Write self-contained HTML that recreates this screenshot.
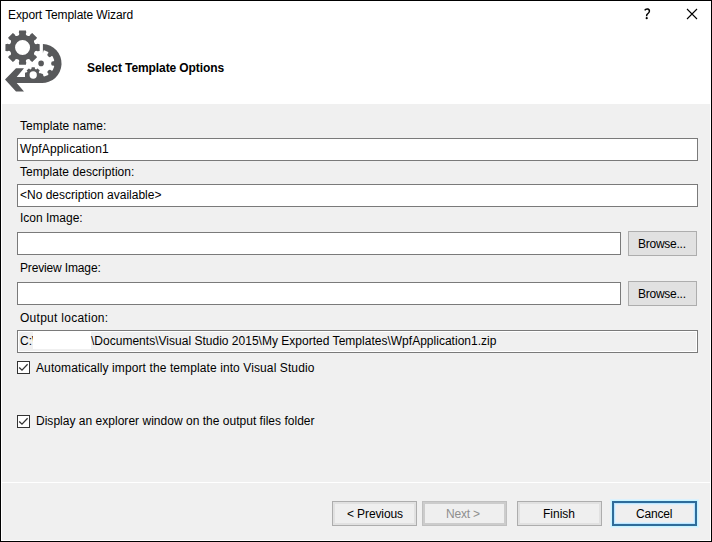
<!DOCTYPE html>
<html><head><meta charset="utf-8"><style>
html,body{margin:0;padding:0;}
body{width:712px;height:542px;position:relative;overflow:hidden;background:#f0f0f0;font-family:"Liberation Sans",sans-serif;font-size:12px;color:#000;}
.a{position:absolute;}
.t{position:absolute;white-space:nowrap;line-height:14px;height:14px;}
.fld{position:absolute;box-sizing:border-box;border:1px solid #7a7a7a;background:#fff;}
.btn{position:absolute;box-sizing:border-box;border:1px solid #adadad;background:#e1e1e1;}
.cb{position:absolute;box-sizing:border-box;width:13px;height:13px;border:1px solid #333;background:#fff;}
</style></head><body>
<div class="a" style="left:0;top:0;width:712px;height:542px;box-sizing:border-box;border:1px solid #000;"></div>
<div class="a" style="left:1px;top:1px;width:710px;height:540px;box-sizing:border-box;border:1px solid #fff;"></div>
<div class="a" style="left:1px;top:1px;width:710px;height:103px;background:#fff;"></div>
<div class="a" style="left:2px;top:482px;width:708px;height:1px;background:#fff;"></div>
<div class="t" style="left:8px;top:8px;letter-spacing:-0.095px;">Export Template Wizard</div>
<svg class="a" style="left:640px;top:6px" width="14" height="16" viewBox="640 6 14 16"><path d="M644.7,10.3 C645.3,9.2 646.6,8.9 647.6,9 C648.8,9.1 649.5,10 649.4,11.3 C649.3,12.6 648.2,13.3 647.3,14.1 C646.7,14.6 646.6,15.2 646.6,16.2" stroke="#000" stroke-width="1.45" fill="none"/><circle cx="646.7" cy="18.2" r="1.1" fill="#000"/></svg>
<svg class="a" style="left:686px;top:8px" width="12" height="12" viewBox="0 0 12 12"><path d="M1,1 L11,11 M11,1 L1,11" stroke="#000" stroke-width="1.1" fill="none"/></svg>
<svg width="712" height="104" viewBox="0 0 712 104" style="position:absolute;left:0;top:0">
<defs>
<mask id="m1" maskUnits="userSpaceOnUse" x="0" y="0" width="712" height="104">
<rect x="0" y="0" width="712" height="104" fill="#fff"/>
<path d="M43.29,50.79 L44.27,50.28 L48.13,51.88 L48.47,52.93 A2.22,2.22 0 1 0 51.57,56.03 L52.62,56.37 L54.22,60.23 L53.71,61.21 A2.22,2.22 0 1 0 53.71,65.59 L54.22,66.57 L52.62,70.43 L51.57,70.77 A2.22,2.22 0 1 0 48.47,73.87 L48.13,74.92 L44.27,76.52 L43.29,76.01 A2.22,2.22 0 1 0 38.91,76.01 L37.93,76.52 L34.07,74.92 L33.73,73.87 A2.22,2.22 0 1 0 30.63,70.77 L29.58,70.43 L27.98,66.57 L28.49,65.59 A2.22,2.22 0 1 0 28.49,61.21 L27.98,60.23 L29.58,56.37 L30.63,56.03 A2.22,2.22 0 1 0 33.73,52.93 L34.07,51.88 L37.93,50.28 L38.91,50.79 A2.22,2.22 0 1 0 43.29,50.79 Z" fill="#000"/>
</mask>
</defs>
<path d="M42.9,44 A19.5,19.5 0 0 1 41.2,83 L16.7,83 L24,91.6 L16,91.6 L5,79.5 L16,68.2 L24,68.2 L16.7,77 L25,77 L25,72.7 L31,71 L38,64 L42.9,56 Z" fill="#58595b" mask="url(#m1)"/>
<path d="M18.80,32.51 L19.16,30.43 L25.94,30.43 L26.30,32.51 A2.31,2.31 0 1 0 30.53,34.26 L32.26,33.05 L37.05,37.84 L35.84,39.57 A2.31,2.31 0 1 0 37.59,43.80 L39.67,44.16 L39.67,50.94 L37.59,51.30 A2.31,2.31 0 1 0 35.84,55.53 L37.05,57.26 L32.26,62.05 L30.53,60.84 A2.31,2.31 0 1 0 26.30,62.59 L25.94,64.67 L19.16,64.67 L18.80,62.59 A2.31,2.31 0 1 0 14.57,60.84 L12.84,62.05 L8.05,57.26 L9.26,55.53 A2.31,2.31 0 1 0 7.51,51.30 L5.43,50.94 L5.43,44.16 L7.51,43.80 A2.31,2.31 0 1 0 9.26,39.57 L8.05,37.84 L12.84,33.05 L14.57,34.26 A2.31,2.31 0 1 0 18.80,32.51 Z M15.05,47.55 a7.5,7.5 0 1,0 15.00,0 a7.5,7.5 0 1,0 -15.00,0 Z" fill="#58595b" fill-rule="evenodd"/>
<path d="M38.30,63.40 a2.8,2.8 0 1,0 5.60,0 a2.8,2.8 0 1,0 -5.60,0 Z" fill="#58595b"/>
<path d="M31.52,68.00 L31.69,67.25 L34.71,67.25 L34.88,68.00 A1.15,1.15 0 0 0 36.96,68.86 L37.62,68.45 L39.75,70.58 L39.34,71.24 A1.15,1.15 0 0 0 40.20,73.32 L40.95,73.49 L40.95,76.51 L40.20,76.68 A1.15,1.15 0 0 0 39.34,78.76 L39.75,79.42 L37.62,81.55 L36.96,81.14 A1.15,1.15 0 0 0 34.88,82.00 L34.71,82.75 L31.69,82.75 L31.52,82.00 A1.15,1.15 0 0 0 29.44,81.14 L28.78,81.55 L26.65,79.42 L27.06,78.76 A1.15,1.15 0 0 0 26.20,76.68 L25.45,76.51 L25.45,73.49 L26.20,73.32 A1.15,1.15 0 0 0 27.06,71.24 L26.65,70.58 L28.78,68.45 L29.44,68.86 A1.15,1.15 0 0 0 31.52,68.00 Z" fill="#58595b"/>
<path d="M29.55,75.00 a3.65,3.65 0 1,0 7.30,0 a3.65,3.65 0 1,0 -7.30,0 Z" fill="#fff"/>
</svg>
<div class="t" style="left:87px;top:61px;font-weight:bold;letter-spacing:-0.09px;">Select Template Options</div>

<div class="t" style="left:20px;top:119px;letter-spacing:0.077px;">Template name:</div>
<div class="fld" style="left:17px;top:138px;width:681px;height:23px;"></div>
<div class="t" style="left:20px;top:142px;letter-spacing:0.14px;">WpfApplication1</div>

<div class="t" style="left:20px;top:165px;letter-spacing:0.05px;">Template description:</div>
<div class="fld" style="left:17px;top:184px;width:681px;height:23px;"></div>
<div class="t" style="left:20px;top:188px;">&lt;No description available&gt;</div>

<div class="t" style="left:20px;top:211px;">Icon Image:</div>
<div class="fld" style="left:17px;top:232px;width:604px;height:23px;"></div>
<div class="btn" style="left:628px;top:231px;width:69px;height:25px;"></div>
<div class="t" style="left:638px;top:237px;letter-spacing:-0.25px;">Browse...</div>

<div class="t" style="left:20px;top:261px;letter-spacing:-0.15px;">Preview Image:</div>
<div class="fld" style="left:17px;top:282px;width:604px;height:23px;"></div>
<div class="btn" style="left:628px;top:281px;width:69px;height:25px;"></div>
<div class="t" style="left:638px;top:287px;letter-spacing:-0.25px;">Browse...</div>

<div class="t" style="left:20px;top:311px;letter-spacing:0.27px;">Output location:</div>
<div class="fld" style="left:17px;top:330px;width:681px;height:23px;background:#f0f0f0;box-shadow:inset 0 0 0 1px #fff;"></div>
<div class="t" style="left:20px;top:334px;">C:\</div>
<div class="a" style="left:33px;top:331px;width:58px;height:18px;background:#fff;"></div>
<div class="t" style="left:91px;top:334px;letter-spacing:0.014px;">\Documents\Visual Studio 2015\My Exported Templates\WpfApplication1.zip</div>

<div class="cb" style="left:17px;top:361px;"></div>
<svg class="a" style="left:17px;top:361px" width="13" height="13" viewBox="0 0 13 13"><path d="M2.2,6.5 L5,9.2 L10.6,3.3" stroke="#333" stroke-width="1.3" fill="none"/></svg>
<div class="t" style="left:36px;top:361px;letter-spacing:0.1px;">Automatically import the template into Visual Studio</div>

<div class="cb" style="left:17px;top:415px;"></div>
<svg class="a" style="left:17px;top:415px" width="13" height="13" viewBox="0 0 13 13"><path d="M2.2,6.5 L5,9.2 L10.6,3.3" stroke="#333" stroke-width="1.3" fill="none"/></svg>
<div class="t" style="left:36px;top:414px;letter-spacing:0.02px;">Display an explorer window on the output files folder</div>

<div class="btn" style="left:332px;top:501px;width:85px;height:25px;background:#efefef;box-shadow:inset 0 0 0 2px #e1e1e1;"></div>
<div class="t" style="left:347px;top:507px;letter-spacing:-0.11px;">&lt; Previous</div>
<div class="btn" style="left:422px;top:501px;width:85px;height:25px;border:1px solid #bfbfbf;box-shadow:inset 0 0 0 2px #cccccc;background:#efefef;"></div>
<div class="t" style="left:446px;top:507px;color:#8e8e8e;letter-spacing:-0.2px;">Next &gt;</div>
<div class="btn" style="left:517px;top:501px;width:85px;height:25px;background:#efefef;box-shadow:inset 0 0 0 2px #e1e1e1;"></div>
<div class="t" style="left:543px;top:507px;">Finish</div>
<div class="btn" style="left:612px;top:501px;width:85px;height:25px;border:2px solid #2e6c9a;background:#efefef;box-shadow:0 0 0 1px #c8f5ff,0 0 0 2px #def2fd,inset 0 0 0 1px #bae6ff,inset 0 0 0 2px #def0fc;"></div>
<div class="t" style="left:636px;top:507px;letter-spacing:-0.2px;">Cancel</div>
</body></html>
